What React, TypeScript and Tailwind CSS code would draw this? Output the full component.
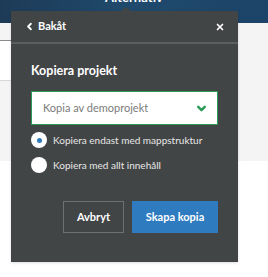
import { ChevronLeft, ChevronDown, X } from "lucide-react";

export default function App() {
	return (
		<div className="relative h-[277px] w-[268px] overflow-hidden bg-white font-['Lato',sans-serif]">
			{/* page behind the popover */}
			<div className="h-[35px] bg-gradient-to-r from-[#1d3b57] via-[#1f4a6d] to-[#1c4368]">
				<div className="-mt-[12px] text-center text-[13px] font-bold text-white">Alternativ</div>
			</div>
			<div className="flex h-[138px]">
				<div className="flex w-[11px] flex-col">
					<div className="h-[17px] bg-[#f4f4f4]" />
					<div className="h-px bg-[#8a8a8a]" />
					<div className="h-[39px] bg-white" />
					<div className="h-px bg-[#d8d8d8]" />
					<div className="flex-1 bg-[#f4f4f4]" />
				</div>
				<div className="flex-1 bg-[#f4f4f4]" />
			</div>
			<div className="pl-[50px] pt-[82px] text-[11px] text-[#8fb3d9]">Åtgärd för markerade</div>

			{/* popover */}
			<div className="absolute left-[11px] top-[11px] h-[251px] w-[227px] bg-[#424546] text-white shadow">
				<div className="absolute -top-[4px] left-[110px] h-0 w-0 border-x-[5px] border-b-[4px] border-x-transparent border-b-[#424546]" />
				<div className="flex h-[33px] items-center justify-between border-b-2 border-[#5c5f60] pl-[13px] pr-[13px]">
					<div className="flex items-center gap-[3px] text-[11px] font-bold">
						<ChevronLeft size={11} strokeWidth={4} />
						<span>Bakåt</span>
					</div>
					<X size={10} strokeWidth={4} />
				</div>
				<div className="px-[20px] pt-[19px]">
					<div className="text-[12.5px] font-bold leading-[16px]">Kopiera projekt</div>
					<div className="mt-[12px] flex h-[34px] items-center justify-between border border-[#2b9a57] bg-white pl-[11px] pr-[9px]">
						<span className="text-[11px] text-[#7b7b7b]">Kopia av demoprojekt</span>
						<ChevronDown size={13} strokeWidth={4.5} className="text-[#2b9a57]" />
					</div>
					<div className="mt-[7px] flex flex-col gap-[9px]">
						<label className="flex h-[16px] items-center gap-[6px] whitespace-nowrap text-[10px] text-[#e8e8e8]">
							<span className="flex h-[16px] w-[16px] shrink-0 items-center justify-center rounded-full bg-white">
								<span className="h-[5px] w-[5px] rounded-full bg-[#2e7bbf]" />
							</span>
							Kopiera endast med mappstruktur
						</label>
						<label className="flex h-[16px] items-center gap-[6px] whitespace-nowrap text-[10px] text-[#e8e8e8]">
							<span className="h-[16px] w-[16px] shrink-0 rounded-full bg-white" />
							Kopiera med allt innehåll
						</label>
					</div>
					<div className="mt-[28px] flex justify-end gap-[8px]">
						<button className="h-[32px] w-[61px] border border-[#6e7172] text-[11px] font-bold">Avbryt</button>
						<button className="h-[32px] w-[86px] bg-[#2e7bbf] text-[11px] font-bold">Skapa kopia</button>
					</div>
				</div>
			</div>
		</div>
	);
}
